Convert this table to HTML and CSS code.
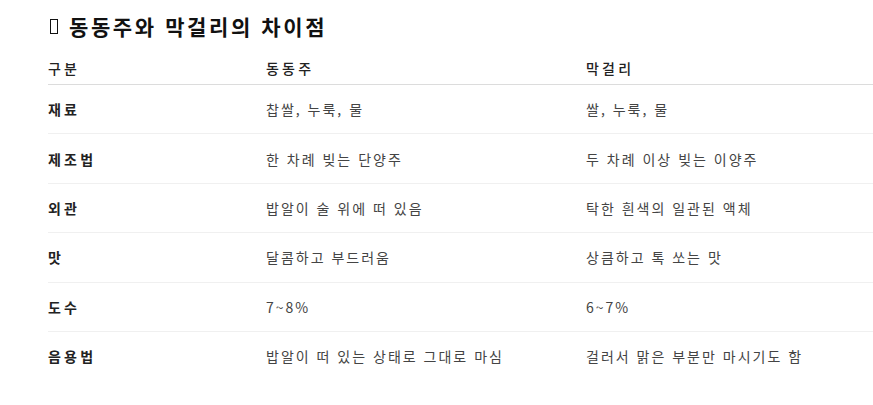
FILE: index.html
```html
<!DOCTYPE html>
<html lang="ko">
<head>
<meta charset="UTF-8">
<title>동동주와 막걸리의 차이점</title>
<link rel="stylesheet" href="styles.css">
</head>
<body>
    <div class="wrap">
        <h2 class="title"><span class="tofu"></span>동동주와 막걸리의 차이점</h2>
        <table class="compare">
            <thead>
                <tr><th class="c1">구분</th><th class="c2">동동주</th><th class="c3">막걸리</th></tr>
            </thead>
            <tbody>
                <tr><th>재료</th><td>찹쌀, 누룩, 물</td><td>쌀, 누룩, 물</td></tr>
                <tr><th>제조법</th><td>한 차례 빚는 단양주</td><td>두 차례 이상 빚는 이양주</td></tr>
                <tr><th>외관</th><td>밥알이 술 위에 떠 있음</td><td>탁한 흰색의 일관된 액체</td></tr>
                <tr><th>맛</th><td>달콤하고 부드러움</td><td>상큼하고 톡 쏘는 맛</td></tr>
                <tr><th>도수</th><td>7~8%</td><td>6~7%</td></tr>
                <tr><th>음용법</th><td>밥알이 떠 있는 상태로 그대로 마심</td><td>걸러서 맑은 부분만 마시기도 함</td></tr>
            </tbody>
        </table>
    </div>
</body>
</html>
```

FILE: styles.css
```css
* {
    margin: 0;
    padding: 0;
}
body {
    font-family: "Noto Sans CJK KR", "Noto Sans", sans-serif;
    color: #222;
    background: #fff;
}
.wrap {
    padding: 12px 0 0 48px;
}
.title {
    display: flex;
    align-items: center;
    font-size: 21px;
    font-weight: 700;
    line-height: 28px;
    letter-spacing: 2.6px;
    color: #111;
}
.tofu {
    display: inline-block;
    width: 6px;
    height: 13px;
    border: 1px solid #111;
    margin: 0 11px 0 2px;
}
.compare {
    width: 100%;
    margin-top: 9px;
    border-collapse: collapse;
    font-size: 14px;
    letter-spacing: 2px;
}
.compare th,
.compare td {
    text-align: left;
    padding: 0;
    height: 48.4px;
    border-bottom: 1px solid #f0f0f0;
}
.compare th {
    letter-spacing: 3.2px;
}
.compare thead th {
    height: 33px;
    padding-top: 2px;
    font-weight: 500;
    border-bottom: 1px solid #dcdcdc;
}
.compare tbody th {
    font-weight: 700;
    color: #222;
}
.compare td {
    color: #444;
    font-weight: 400;
}
.compare tbody tr:last-child th,
.compare tbody tr:last-child td {
    border-bottom: none;
}
.c1 {
    width: 218px;
}
.c2 {
    width: 320px;
}
```
